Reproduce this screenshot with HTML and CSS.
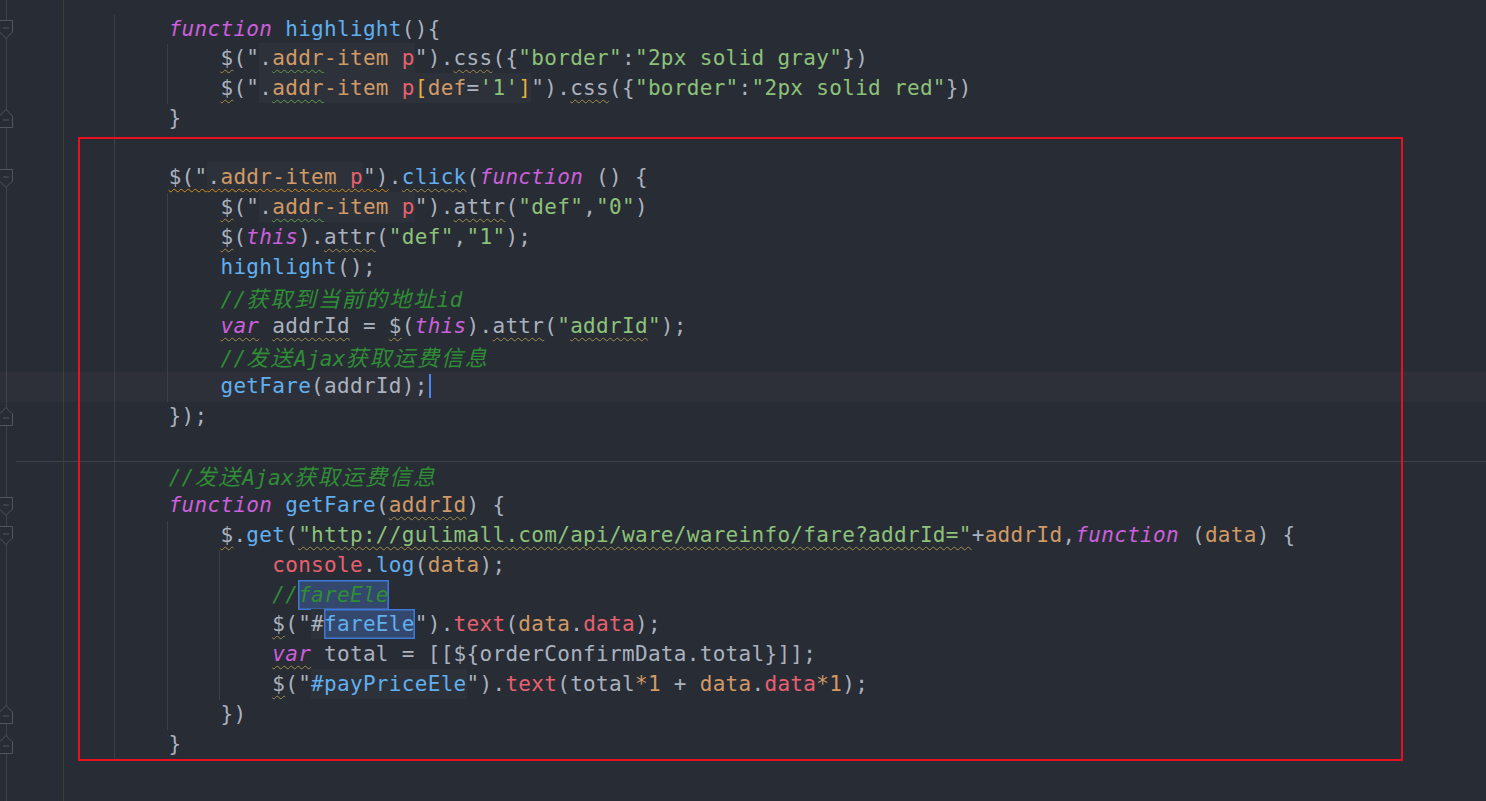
FILE: index.html
```html
<!DOCTYPE html>
<html lang="zh">

<head>
    <meta charset="UTF-8">
    <title>editor</title>
    <link rel="stylesheet" href="styles.css">
</head>

<body>
    <div class="editor">
        <div class="row g1"><div class="gut"><svg class="fold" viewBox="0 0 16 19"><path d="M1.5 .5H14.5V12L8 18.5 1.5 12Z"/><path class="minus" d="M5 8h6"/></svg></div><div class="code">        <span class="k">function</span> <span class="f">highlight</span>(){</div></div>
        <div class="row g2"><div class="gut"></div><div class="code">            <span class="w">$</span>("<span class="inj">.<span class="o"><span class="wg">addr</span>-item</span> <span class="r">p</span></span>").<span class="w">css</span>({<span class="s">"border"</span>:<span class="s">"2px solid gray"</span>})</div></div>
        <div class="row g2"><div class="gut"></div><div class="code">            <span class="w">$</span>("<span class="inj">.<span class="o"><span class="wg">addr</span>-item</span> <span class="r">p</span><span class="y">[</span><span class="o">def</span>=<span class="s">'1'</span><span class="y">]</span></span>").<span class="w">css</span>({<span class="s">"border"</span>:<span class="s">"2px solid red"</span>})</div></div>
        <div class="row g1"><div class="gut"><svg class="fold" viewBox="0 0 16 19"><path d="M1.5 18.5H14.5V7L8 .5 1.5 7Z"/><path class="minus" d="M5 11h6"/></svg></div><div class="code">        }</div></div>
        <div class="row g1"><div class="gut"></div><div class="code"></div></div>
        <div class="row g1"><div class="gut"><svg class="fold" viewBox="0 0 16 19"><path d="M1.5 .5H14.5V12L8 18.5 1.5 12Z"/><path class="minus" d="M5 8h6"/></svg></div><div class="code">        <span class="wo">$("<span class="inj">.<span class="o">addr-item</span> <span class="r">p</span></span>")</span>.<span class="f w">click</span>(<span class="k">function</span> () {</div></div>
        <div class="row g2"><div class="gut"></div><div class="code">            <span class="w">$</span>("<span class="inj">.<span class="o"><span class="wg">addr</span>-item</span> <span class="r">p</span></span>").<span class="w">attr</span>(<span class="s">"def"</span>,<span class="s">"0"</span>)</div></div>
        <div class="row g2"><div class="gut"></div><div class="code">            <span class="w">$</span>(<span class="k">this</span>).<span class="w">attr</span>(<span class="s">"def"</span>,<span class="s">"1"</span>);</div></div>
        <div class="row g2"><div class="gut"></div><div class="code">            <span class="f">highlight</span>();</div></div>
        <div class="row g2"><div class="gut"></div><div class="code">            <span class="c">//<span class="cn">获取到当前的地址</span>id</span></div></div>
        <div class="row g2"><div class="gut"></div><div class="code">            <span class="k w">var</span> <span class="w">addrId</span> = <span class="w">$</span>(<span class="k">this</span>).<span class="w">attr</span>(<span class="s">"<span class="w">addrId</span>"</span>);</div></div>
        <div class="row g2"><div class="gut"></div><div class="code">            <span class="c">//<span class="cn">发送</span>Ajax<span class="cn">获取运费信息</span></span></div></div>
        <div class="row g2 cur"><div class="gut"></div><div class="code">            <span class="f">getFare</span>(addrId);<span class="caret"></span></div></div>
        <div class="row g1"><div class="gut"><svg class="fold" viewBox="0 0 16 19"><path d="M1.5 18.5H14.5V7L8 .5 1.5 7Z"/><path class="minus" d="M5 11h6"/></svg></div><div class="code">        });</div></div>
        <div class="row g1"><div class="gut"></div><div class="code"></div></div>
        <div class="row g1 sep"><div class="gut"></div><div class="code">        <span class="c">//<span class="cn">发送</span>Ajax<span class="cn">获取运费信息</span></span></div></div>
        <div class="row g1"><div class="gut"><svg class="fold" viewBox="0 0 16 19"><path d="M1.5 .5H14.5V12L8 18.5 1.5 12Z"/><path class="minus" d="M5 8h6"/></svg></div><div class="code">        <span class="k">function</span> <span class="f">getFare</span>(<span class="o w">addrId</span>) {</div></div>
        <div class="row g2"><div class="gut"><svg class="fold" viewBox="0 0 16 19"><path d="M1.5 .5H14.5V12L8 18.5 1.5 12Z"/><path class="minus" d="M5 8h6"/></svg></div><div class="code">            <span class="w">$</span>.<span class="f">get</span>(<span class="s w">"http://gulimall.com/api/ware/wareinfo/fare?addrId="</span>+<span class="o">addrId</span>,<span class="k">function</span> (<span class="o">data</span>) {</div></div>
        <div class="row g3"><div class="gut"></div><div class="code">                <span class="r">console</span>.<span class="f">log</span>(<span class="o">data</span>);</div></div>
        <div class="row g3"><div class="gut"></div><div class="code">                <span class="c">//<span class="sel">fareEle</span></span></div></div>
        <div class="row g3"><div class="gut"></div><div class="code">                <span class="w">$</span>("<span class="inj">#<span class="sel f">fareEle</span></span>").<span class="r">text</span>(<span class="o">data</span>.<span class="r">data</span>);</div></div>
        <div class="row g3"><div class="gut"></div><div class="code">                <span class="k w">var</span> total = [[${orderConfirmData.total}]];</div></div>
        <div class="row g3"><div class="gut"></div><div class="code">                <span class="w">$</span>("<span class="inj f">#payPriceEle</span>").<span class="r">text</span>(total<span class="o">*1</span> + <span class="o">data</span>.<span class="r">data</span><span class="o">*1</span>);</div></div>
        <div class="row g2"><div class="gut"><svg class="fold" viewBox="0 0 16 19"><path d="M1.5 18.5H14.5V7L8 .5 1.5 7Z"/><path class="minus" d="M5 11h6"/></svg></div><div class="code">            })</div></div>
        <div class="row g1"><div class="gut"><svg class="fold" viewBox="0 0 16 19"><path d="M1.5 18.5H14.5V7L8 .5 1.5 7Z"/><path class="minus" d="M5 11h6"/></svg></div><div class="code">        }</div></div>

        <div class="mark"></div>
    </div>
</body>

</html>
```

FILE: styles.css
```css
body {
    margin: 0;
    background: #282c34;
    overflow: hidden;
}

.editor {
    position: relative;
    height: 801px;
    padding-top: 14.5px;
    box-sizing: border-box;
    background:
        linear-gradient(#3d424b, #3d424b) 6px 0 / 1px 100% no-repeat,
        linear-gradient(#34403a, #34403a) 63px 0 / 1px 100% no-repeat;
    font-family: "DejaVu Sans Mono", monospace;
    font-size: 21px;
    letter-spacing: 0.31px;
    color: #abb2bf;
}

.row {
    display: flex;
    height: 29.8px;
}

.gut {
    width: 65px;
    flex: none;
    display: flex;
    align-items: center;
}

.fold {
    width: 16px;
    height: 19px;
    margin-left: -2px;
    fill: #282c34;
    stroke: #50555e;
    stroke-width: 1;
}

.fold .minus {
    fill: none;
}

.code {
    flex: 1;
    white-space: pre;
    line-height: 29.8px;
}

/* indent guides */
.g1 .code {
    background: linear-gradient(#3b4048, #3b4048) 49px 0 / 1px 100% no-repeat;
}

.g2 .code {
    background:
        linear-gradient(#3b4048, #3b4048) 49px 0 / 1px 100% no-repeat,
        linear-gradient(#3b4048, #3b4048) 102px 0 / 1px 100% no-repeat;
}

.g3 .code {
    background:
        linear-gradient(#3b4048, #3b4048) 49px 0 / 1px 100% no-repeat,
        linear-gradient(#3b4048, #3b4048) 102px 0 / 1px 100% no-repeat,
        linear-gradient(#3b4048, #3b4048) 154px 0 / 1px 100% no-repeat;
}

.cur {
    background: rgba(255, 255, 255, 0.025);
}

.sep {
    background: linear-gradient(#3b404a, #3b404a) 16px 0 / 100% 1px no-repeat;
}

/* tokens */
.k {
    color: #cc5fdb;
    font-style: italic;
}

.f {
    color: #61afef;
}

.s {
    color: #8dc27a;
}

.o {
    color: #d19a66;
}

.r {
    color: #e8606f;
}

.y {
    color: #e5b03c;
}

.c {
    color: #2f8d36;
    font-style: italic;
}

.cn {
    font-family: "Noto Sans CJK SC", sans-serif;
    font-size: 22px;
    letter-spacing: 1.8px;
}

.inj {
    background: #2d3139;
    padding: 3px 0;
}

.sel {
    background: #34486e;
    box-shadow: inset 0 0 0 1.5px #3f79d8;
    padding: 3px 0;
}

.w {
    text-decoration: underline wavy #a38c4c;
    text-decoration-thickness: 1px;
    text-underline-offset: 4px;
}

.wg {
    text-decoration: underline wavy #5f9b4c;
    text-decoration-thickness: 1px;
    text-underline-offset: 4px;
}

.wo {
    text-decoration: underline wavy #d58a1a;
    text-decoration-thickness: 1px;
    text-underline-offset: 4px;
}

.caret {
    display: inline-block;
    width: 2px;
    height: 24px;
    margin-left: 1px;
    vertical-align: -5px;
    background: #4d86f0;
}

/* red annotation box */
.mark {
    position: absolute;
    left: 78px;
    top: 137px;
    width: 1325px;
    height: 624px;
    box-sizing: border-box;
    border: 2px solid #e8111f;
}
```
